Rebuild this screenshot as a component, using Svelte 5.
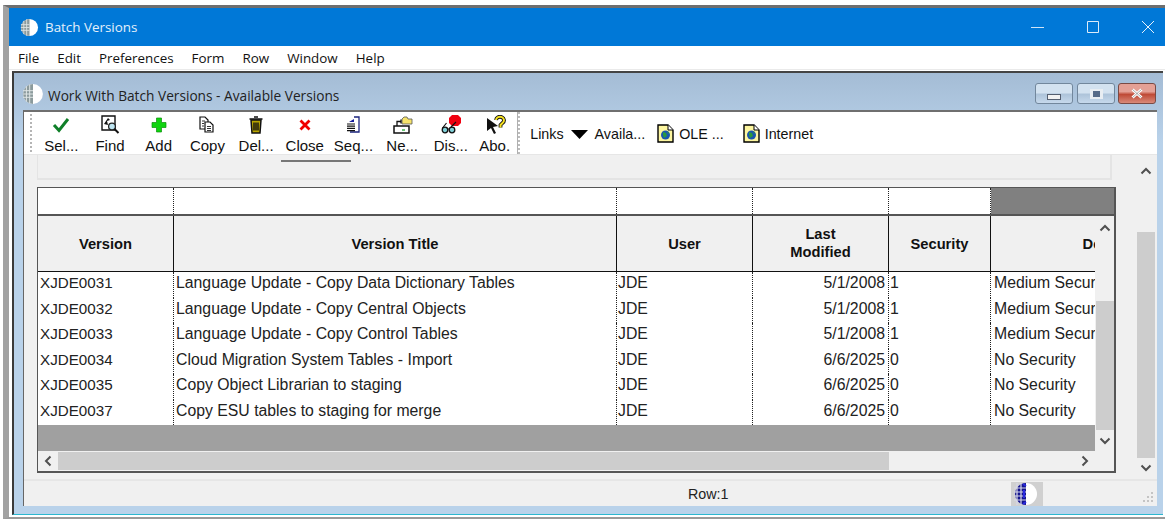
<script>
  const menus = ['File', 'Edit', 'Preferences', 'Form', 'Row', 'Window', 'Help'];
  const tools = ['check', 'find', 'add', 'copy', 'del', 'close', 'seq', 'new', 'dis', 'about'];
  const labels = {
    check: 'Sel...', find: 'Find', add: 'Add', copy: 'Copy', del: 'Del...',
    close: 'Close', seq: 'Seq...', new: 'Ne...', dis: 'Dis...', about: 'Abo.'
  };
  const rows = [
    ['XJDE0031', 'Language Update - Copy Data Dictionary Tables', 'JDE', '5/1/2008', '1', 'Medium Security'],
    ['XJDE0032', 'Language Update - Copy Central Objects', 'JDE', '5/1/2008', '1', 'Medium Security'],
    ['XJDE0033', 'Language Update - Copy Control Tables', 'JDE', '5/1/2008', '1', 'Medium Security'],
    ['XJDE0034', 'Cloud Migration System Tables - Import', 'JDE', '6/6/2025', '0', 'No Security'],
    ['XJDE0035', 'Copy Object Librarian to staging', 'JDE', '6/6/2025', '0', 'No Security'],
    ['XJDE0037', 'Copy ESU tables to staging for merge', 'JDE', '6/6/2025', '0', 'No Security']
  ];
</script>

{#snippet globe(size)}
  <svg width={size} height={size} viewBox="0 0 20 20">
    <circle cx="10" cy="10" r="9" fill="#fff" />
    <path d="M10 1a9 9 0 0 0 0 18z" fill="#8b9a9c" />
    <path d="M1 7h9M1 10h9M1 13h9M4 3v14M7 1.500v17" stroke="#dfe5e5" stroke-width="0.900" fill="none" />
  </svg>
{/snippet}

{#snippet docGlobe()}
  <svg class="doc" width="17" height="19" viewBox="0 0 17 19">
    <path d="M1 1h10l5 5v12H1z" fill="#fdf6a0" stroke="#000" stroke-width="1.400" />
    <path d="M11 1v5h5" fill="#fff" stroke="#000" />
    <circle cx="8.500" cy="11" r="4.500" fill="#1a56b0" />
    <path d="M6 8l3 1 1 3-3 2-1-3zM10 7l2 2-1 1z" fill="#2c9a3c" />
  </svg>
{/snippet}

{#snippet icon(name)}
  <svg width="22" height="20" viewBox="0 0 22 20">
    {#if name === 'check'}
      <path d="M4 10l5 5.500L18 4" fill="none" stroke="#0f7f28" stroke-width="3" />
    {:else if name === 'find'}
      <path d="M3 1h13v14H3z" fill="#fff" stroke="#111" stroke-width="1.400" />
      <path d="M5 9l4-6 2 2-3 1 1 4z" fill="#111" />
      <circle cx="13" cy="11.500" r="3.400" fill="#bfe6f2" stroke="#222" stroke-width="1.300" />
      <path d="M15.500 14l4 4" stroke="#111" stroke-width="2" />
    {:else if name === 'add'}
      <path d="M8.500 3h5v4.500H18v5h-4.500V17h-5v-4.500H4v-5h4.500z" fill="#0fd40f" stroke="#0c8f0c" stroke-width="0.700" />
    {:else if name === 'copy'}
      <path d="M4 2h5l3 3v9H4z" fill="#fff" stroke="#111" stroke-width="1.200" />
      <path d="M9 7h5l3 3v7H9z" fill="#fff" stroke="#111" stroke-width="1.200" />
      <path d="M6 6h3M6 8.500h2M6 11h2M11 11.500h4M11 13.500h4M11 15.500h4" stroke="#333" />
    {:else if name === 'del'}
      <path d="M6 5h10l-1 13H7z" fill="#b8a500" stroke="#111" stroke-width="1.500" />
      <path d="M4.500 4h13M9 2h4M9 7.500v8M11 7.500v8M13 7.500v8" stroke="#111" stroke-width="1.400" />
    {:else if name === 'close'}
      <path d="M6.500 5.500l9 9M15.500 5.500l-9 9" stroke="#f00000" stroke-width="2.800" />
    {:else if name === 'seq'}
      <path d="M12 2h5v15H8" fill="#fff" stroke="#1a237e" stroke-width="1.300" />
      <path d="M12 2v5H7l5-3" fill="#12189a" />
      <path d="M5 9h8M5 11.200h8M5 13.400h8M5 15.600h8" stroke="#111" stroke-width="1.200" />
    {:else if name === 'new'}
      <path d="M11 4l2-2h3l1 2h4v5H11z" fill="#f6e36a" stroke="#555" stroke-width="0.800" />
      <path d="M3 11h15v7H3z" fill="#fff" stroke="#111" stroke-width="1.500" />
      <path d="M6 11V6.500h4M10 4.500v4" fill="none" stroke="#111" stroke-width="1.300" />
      <path d="M11 15h3" stroke="#39b54a" stroke-width="1.500" />
    {:else if name === 'dis'}
      <path d="M12 0h6l3 3v5l-3 3h-6l-3-3V3z" fill="#f00010" />
      <circle cx="5" cy="15" r="2.800" fill="#7fd0d8" stroke="#111" stroke-width="1.300" />
      <circle cx="12" cy="15" r="2.800" fill="#7fd0d8" stroke="#111" stroke-width="1.300" />
      <path d="M7.500 14h2M2.500 13l4-5M11 12l5-5" stroke="#111" stroke-width="1.200" />
    {:else}
      <path d="M3 3l11 8-5 1 3 6-2 1-3-6-4 3z" fill="#111" />
      <path d="M12 5a4 3.500 0 1 1 6.500 3l-2 2v2.500" fill="none" stroke="#111" stroke-width="3.800" />
      <path d="M12 5a4 3.500 0 1 1 6.500 3l-2 2v2.500" fill="none" stroke="#f7e21f" stroke-width="2" />
    {/if}
  </svg>
{/snippet}

{#snippet chev(dir)}
  <svg class="chev {dir}" width="12" height="8" viewBox="0 0 12 8">
    <path d="M1.500 6.500L6 2l4.500 4.500" fill="none" stroke="#505050" stroke-width="2" />
  </svg>
{/snippet}

<div class="page">
  <div class="app">
    <header class="titlebar">
      <span class="title-globe">{@render globe(19)}</span>
      <span class="title-text">Batch Versions</span>
      <span class="spacer"></span>
      <svg class="win" width="14" height="14" viewBox="0 0 14 14"><path d="M0 7.500h13" stroke="#cfe4f7" /></svg>
      <svg class="win" width="14" height="14" viewBox="0 0 14 14"><path d="M1.500 1.500h11v11h-11z" fill="none" stroke="#dcebf9" /></svg>
      <svg class="win last" width="14" height="14" viewBox="0 0 14 14"><path d="M1 1l12 12M13 1L1 13" stroke="#e6f1fb" /></svg>
    </header>
    <nav class="menu">
      {#each menus as m}<span>{m}</span>{/each}
    </nav>
    <div class="inner">
      <div class="inner-title">
        <span class="inner-globe">{@render globe(22)}</span>
        <span class="inner-text">Work With Batch Versions - Available Versions</span>
        <span class="spacer"></span>
        <span class="wbtn first"><i class="glyph min"></i></span>
        <span class="wbtn"><i class="glyph max"></i></span>
        <span class="wbtn red"><svg width="16" height="11" viewBox="0 0 16 11"><path d="M3.500 1.500l9 8M12.500 1.500l-9 8" stroke="#fff" stroke-width="3" /><path d="M3.500 1.500l9 8M12.500 1.500l-9 8" stroke="#555" stroke-width="0.500" /></svg></span>
      </div>
      <div class="client">
        <div class="toolbar">
          <span class="grip"></span>
          {#each tools as t}
            <button class="tool" class:abo={t === 'about'}>
              {@render icon(t)}
              <span>{labels[t]}</span>
            </button>
          {/each}
          <span class="sep"></span>
          <span class="link links">Links</span>
          <svg class="arrow" width="17" height="9" viewBox="0 0 17 9"><path d="M0 0h17L8.500 9z" fill="#000" /></svg>
          <span class="link avail">Availa...</span>
          {@render docGlobe()}
          <span class="link ole">OLE ...</span>
          {@render docGlobe()}
          <span class="link">Internet</span>
        </div>
        <div class="work">
          <div class="main">
            <div class="group"><span class="tabline"></span></div>
            <div class="grid">
              <div class="filter">
                <span class="fc c1"></span><span class="fc c2"></span><span class="fc c3"></span><span class="fc c4"></span><span class="fc c5"></span><span class="fill"></span>
              </div>
              <div class="viewport">
                <div class="table">
                  <div class="head">
                    <div class="h c1">Version</div>
                    <div class="h c2">Version Title</div>
                    <div class="h c3">User</div>
                    <div class="h c4">Last<br />Modified</div>
                    <div class="h c5">Security</div>
                    <div class="h c6">Description</div>
                  </div>
                  {#each rows as r}
                    <div class="row">
                      <div class="d c1">{r[0]}</div>
                      <div class="d c2">{r[1]}</div>
                      <div class="d c3">{r[2]}</div>
                      <div class="d c4 num">{r[3]}</div>
                      <div class="d c5">{r[4]}</div>
                      <div class="d c6">{r[5]}</div>
                    </div>
                  {/each}
                  <div class="rest"></div>
                </div>
                <div class="vbar">
                  {@render chev('up')}
                  <span class="vgap"></span>
                  <span class="vthumb"></span>
                  {@render chev('down')}
                </div>
              </div>
              <div class="hbar">
                {@render chev('left')}
                <span class="hthumb"></span>
                <span class="spacer"></span>
                {@render chev('right')}
              </div>
            </div>
          </div>
          <div class="outer-bar">
            {@render chev('up')}
            <span class="ogap"></span>
            <span class="othumb"></span>
            {@render chev('down')}
          </div>
        </div>
        <footer class="status">
          <span class="rowno">Row:1</span>
          <span class="status-globe">
            <svg width="32" height="24" viewBox="0 0 32 24">
              <circle cx="15" cy="12" r="11" fill="#fff" />
              <path d="M15 1a11 11 0 0 0-11 11 11 11 0 0 0 11 11z" fill="#14148c" />
              <path d="M3 6h12M3 10h12M3 14h12M3 18h12M6 1v22M10 1v22" stroke="#d8d8e8" stroke-width="1.200" />
              <path d="M12 2l3 2M12 22l3-2M13 8v8" stroke="#2a2ae0" stroke-width="2" />
            </svg>
          </span>
          <svg class="resize" width="12" height="12" viewBox="0 0 12 12">
            <path d="M9 1h2v2H9zM5 5h2v2H5zM9 5h2v2H9zM1 9h2v2H1zM5 9h2v2H5zM9 9h2v2H9z" fill="#c4c4c4" />
          </svg>
        </footer>
      </div>
    </div>
  </div>
</div>

<style>
  :global(body) { margin: 0; background: #fff; }
  * { box-sizing: border-box; }
  .page {
    width: 1168px; height: 520px; padding: 5px 3px 1px 3px;
    background: #fff; overflow: hidden;
    font-family: "Liberation Sans", Arial, sans-serif; color: #000;
  }
  .app {
    height: 514px; display: flex; flex-direction: column;
    border-top: 3px solid #6e6e6e; border-left: 6px solid #a2a2a2;
    border-bottom: 2px solid #9a9a9a;
  }
  .spacer { flex: 1; }
  .titlebar {
    height: 38px; flex: none; background: #0078d7; display: flex; align-items: center;
    padding-left: 11px; color: #e4f0fb;
    font: 13.400px "Open Sans", sans-serif;
  }
  .title-globe { display: flex; margin-right: 6px; }
  .win { margin-right: 41px; }
  .win.last { margin-right: 10px; }
  .menu {
    height: 24px; flex: none; background: #fff; display: flex; align-items: center; gap: 18px;
    padding-left: 9px; color: #111;
    font: 13.400px "Open Sans", sans-serif;
    border-bottom: 1px solid #eaeaea;
  }
  .inner {
    flex: 1; min-height: 0; margin: 1px 2px 2px 3px; display: flex; flex-direction: column;
    border-top: 2px solid #444; border-left: 2px solid #3a3a3a;
    border-bottom: 1px solid #2bb7cf;
    padding: 0 6px 8px 9px;
    background: linear-gradient(#a4bcd5, #b9d2ea 70px);
  }
  .inner-title {
    height: 37px; padding-top: 4px; flex: none; display: flex; align-items: center; margin-left: -1px;
    color: #222; font: 13.700px "Open Sans", sans-serif;
  }
  .inner-globe { display: flex; margin-right: 4px; }
  .inner-text { padding-top: 3px; }
  .wbtn {
    width: 38px; height: 21px; margin-left: 3px; border: 1px solid #72879c; border-radius: 3px;
    background: linear-gradient(#d3e2f0 45%, #aec4da 55%, #c6d9ec);
    display: flex; align-items: center; justify-content: center;
  }
  .wbtn.first { margin-right: 1px; }
  .wbtn.red {
    background: linear-gradient(#e4a095 40%, #bf4a36 55%, #d98a7a);
    border-color: #7a4a44; margin-right: 1px;
  }
  .glyph { display: block; background: #f2f2f2; border: 1px solid #555f70; }
  .glyph.min { width: 14px; height: 6px; margin-top: 7px; }
  .glyph.max { width: 13px; height: 10px; border-width: 2px 3px; border-color: #e8edf2; background: #566a88; }
  .client {
    flex: 1; min-height: 0; display: flex; flex-direction: column; background: #f0f0f0;
    border-top: 2px solid #6f6f6f; border-left: 1px solid #666;
  }
  .toolbar {
    height: 43px; flex: none; background: #fff; display: flex; align-items: center;
    border-bottom: 1px solid #e6e6e6; padding-left: 6px;
  }
  .grip {
    width: 2px; height: 38px; margin-right: 5px;
    background: repeating-linear-gradient(#b5b5b5 0 2px, transparent 2px 4px);
  }
  .tool {
    width: 48.700px; height: 41px; flex: none; padding: 2px 0 0; border: 0; background: none;
    display: flex; flex-direction: column; align-items: center; justify-content: flex-start;
    font: 15px "Liberation Sans", sans-serif; color: #111; line-height: 15px; white-space: nowrap;
  }
  .tool svg { height: 20px; display: block; margin-bottom: 3px; }
  .tool.abo { width: 39px; }
  .sep {
    width: 3px; height: 42px; margin: 0 10px 0 3px;
    background: repeating-linear-gradient(#bcbcbc 0 2px, #fff 2px 4px);
    border-left: 1px solid #b0b0b0;
  }
  .link { font: 14.300px "Liberation Sans", sans-serif; color: #111; white-space: nowrap; padding-top: 1px; }
  .arrow { margin: 2px 7px 0 7px; }
  .avail { margin-right: 12px; }
  .doc { margin-right: 5px; flex: none; }
  .ole { margin-right: 19px; }
  .work { flex: 1; min-height: 0; display: flex; }
  .main { width: 1113px; flex: none; padding-left: 13px; }
  .group {
    height: 25px; width: 1075px; position: relative;
    border-right: 2px solid #e4e4e4; border-bottom: 2px solid #e4e4e4; border-left: 1px solid #e4e4e4;
  }
  .tabline {
    position: absolute; left: 243px; top: 5px; width: 70px; height: 2px; background: #777;
  }
  .grid {
    margin-top: 7px; width: 1079px; height: 286px; display: flex; flex-direction: column;
    border: 1px solid #555; border-width: 1px 2px 2px 1px; background: #f0f0f0;
  }
  .filter { height: 28px; flex: none; display: flex; background: #808080; border-bottom: 2px solid #555; }
  .fc { background: #fff; border-right: 1px dotted #222; flex: none; }
  .fill { flex: 1; }
  .c1 { width: 136px; }
  .c2 { width: 443px; }
  .c3 { width: 136px; }
  .c4 { width: 136px; }
  .c5 { width: 102px; }
  .c6 { width: 264px; }
  .viewport { height: 235px; flex: none; display: flex; }
  .table { width: 1057px; flex: none; overflow: hidden; background: #a0a0a0; display: flex; flex-direction: column; }
  .head {
    display: flex; height: 56px; width: 1217px; flex: none;
    background: #f0f0f0; border-bottom: 1px solid #111;
  }
  .h {
    display: flex; align-items: center; justify-content: center; text-align: center;
    font-weight: 700; font-size: 14.700px; line-height: 18px; color: #111;
    border-right: 1px solid #111; flex: none; white-space: nowrap;
  }
  .h.c4 { padding-bottom: 1px; }
  .h.c6 { border-right: 0; }
  .row { display: flex; height: 25.500px; width: 1217px; flex: none; background: #fff; }
  .d {
    flex: none; font-size: 15.800px; line-height: 22px; color: #222; padding-left: 2px; white-space: nowrap;
    border-right: 1px dotted #222; overflow: hidden;
  }
  .d.c1 { font-size: 15.200px; }
  .d.c3 { padding-left: 1px; }
  .d.c5 { padding-left: 1px; }
  .d.c6 { border-right: 0; padding-left: 3px; }
  .num { text-align: right; padding-right: 3px; }
  .rest { flex: 1; background: #a0a0a0; }
  .vbar { width: 19px; display: flex; flex-direction: column; align-items: center; padding-top: 8px; }
  .vgap { height: 69px; flex: none; }
  .vthumb { width: 18px; height: 129px; background: #cdcdcd; flex: none; }
  .chev.down { transform: rotate(180deg); }
  .chev.left { transform: rotate(-90deg); }
  .chev.right { transform: rotate(90deg); }
  .vbar .chev.down { margin-top: 7px; }
  .hbar {
    height: 20px; flex: none; display: flex; align-items: center; padding-left: 4px; width: 1076px;
  }
  .hthumb { width: 831px; height: 18px; background: #cdcdcd; margin-left: 4px; flex: none; }
  .hbar .chev.right { margin-right: 23px; }
  .outer-bar {
    width: 18px; display: flex; flex-direction: column; align-items: center; padding-top: 12px;
  }
  .ogap { height: 57px; flex: none; }
  .othumb { width: 18px; height: 226px; background: #cdcdcd; flex: none; }
  .outer-bar .chev.down { margin-top: 6px; }
  .status {
    height: 27px; flex: none; border-top: 2px solid #e6e6e6; display: flex; align-items: center;
    font-size: 14.300px; color: #222; position: relative; padding-left: 664px;
  }
  .rowno { width: 323px; }
  .status-globe { width: 32px; height: 24px; background: #d0d0d0; display: flex; }
  .resize { position: absolute; right: 3px; bottom: 3px; }
</style>
